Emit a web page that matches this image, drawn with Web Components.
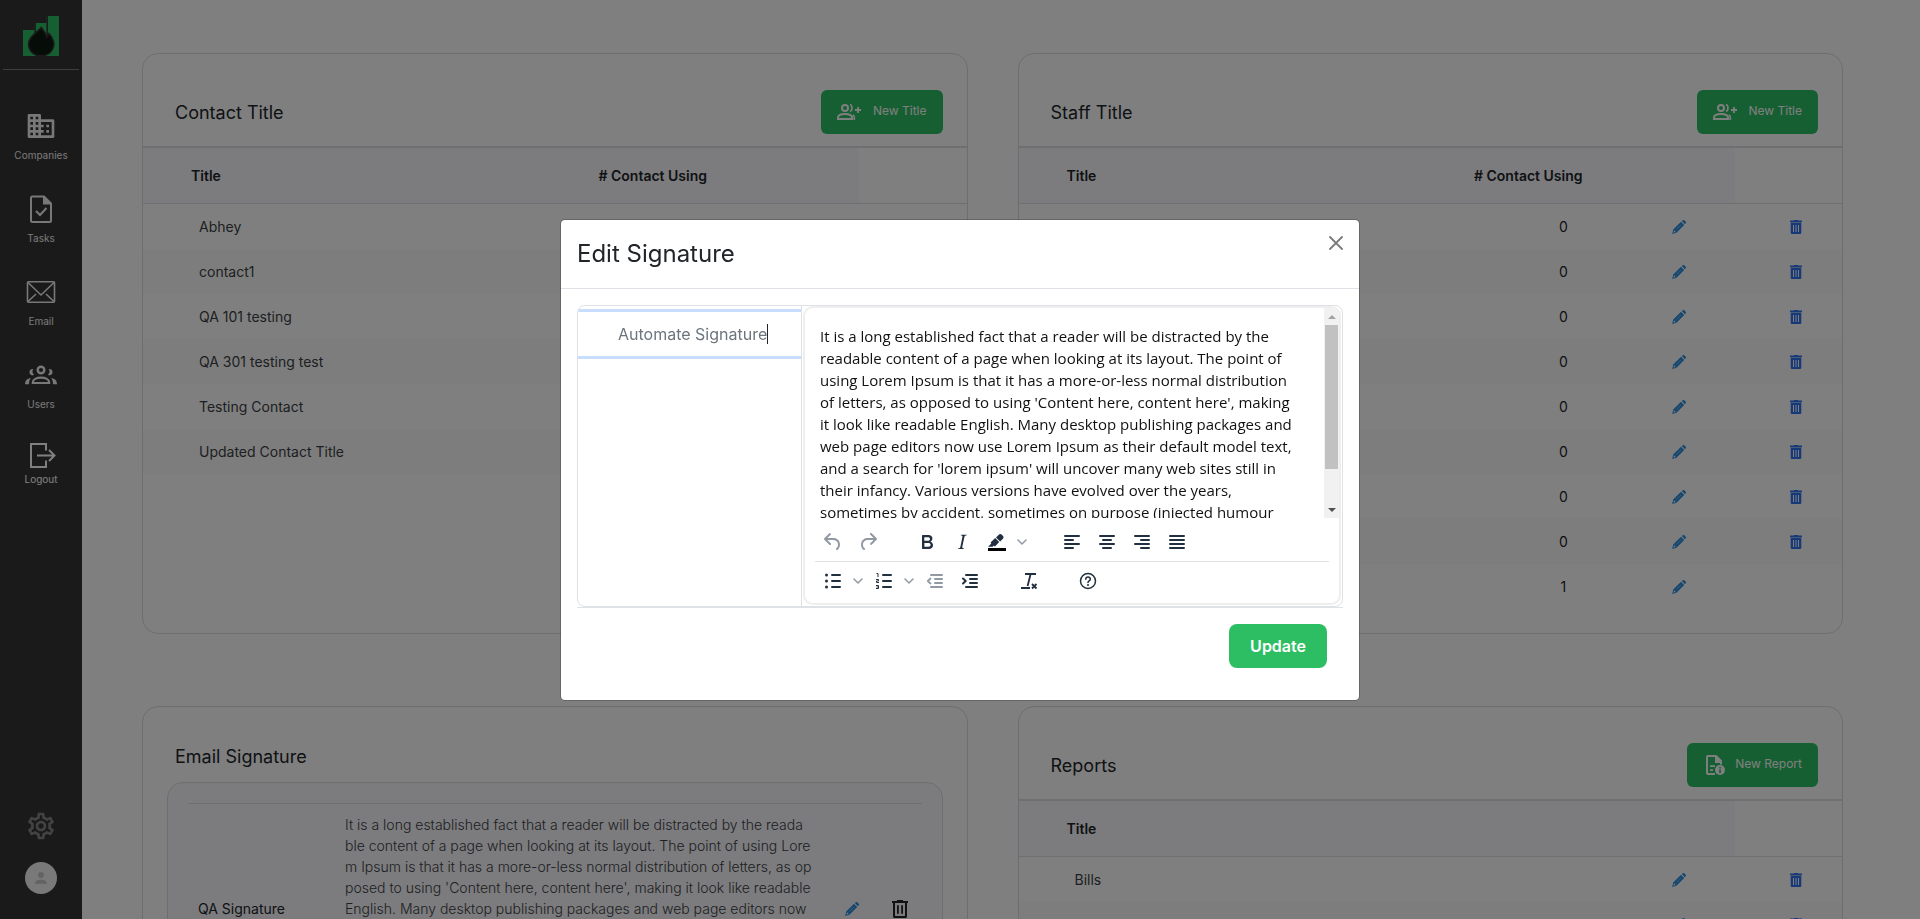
<!DOCTYPE html>
<html lang="en">
<head>
<meta charset="utf-8">
<title>Settings</title>
<style>
html, body { margin: 0; height: 100%; background: #fff; }
body { font-family: Inter, "Liberation Sans", sans-serif; font-optical-sizing: none; font-size: 14px; color: #212529; }
</style>
</head>
<body>
<app-shell></app-shell>

<script>
const ICONS = {
  logo: ['0 0 36 40', '<path fill="#2dbe64" d="M0 14h11.500V7H23.500V0H36v40H0z"/><path fill="none" stroke="#343434" stroke-width="1.500" d="M12.200 7v14M24.200 0v22"/><path fill="#0d1a12" stroke="#343434" stroke-width="1.500" d="M18.200 11.500c2.200 2.800 4.500 5 5.500 9.500l2.200-3.500c3 3.500 5 7 5 11A12.700 12 0 0 1 22 39.500h-8A12.700 12 0 0 1 5.500 28.500C5.500 21 13 17.500 18.200 11.500z"/>'],
  companies: ['0 0 24 24', '<path d="M12 7V4a1 1 0 0 0-1-1H3a1 1 0 0 0-1 1v16a1 1 0 0 0 1 1h18a1 1 0 0 0 1-1V8a1 1 0 0 0-1-1zM6 19H4v-2h2v2zm0-4H4v-2h2v2zm0-4H4V9h2v2zm0-4H4V5h2v2zm4 12H8v-2h2v2zm0-4H8v-2h2v2zm0-4H8V9h2v2zm0-4H8V5h2v2zm10 12h-8v-2h2v-2h-2v-2h2v-2h-2V9h8v10zm-2-8h-2v2h2v-2zm0 4h-2v2h2v-2z"/>'],
  tasks: ['0 0 32 32', '<path fill="none" stroke="currentColor" stroke-width="2" stroke-linejoin="round" d="M19 3.500H7.500A1.500 1.500 0 0 0 6 5v22.500A1.500 1.500 0 0 0 7.500 29h17a1.500 1.500 0 0 0 1.500-1.500V10.500z"/><path d="M18 3l8.500 8.500H18z"/><path fill="none" stroke="currentColor" stroke-width="2" d="M11 18l4 4 6.500-7"/>'],
  email: ['0 0 32 32', '<g fill="none" stroke="currentColor" stroke-width="1.600"><rect x="2.500" y="5.800" width="27" height="20.400" rx="1"/><path d="M3 6.500l13 12.500L29 6.500M3 25.500l8-7.500M29 25.500l-8-7.500"/></g>'],
  users: ['0 0 32 32', '<circle cx="16" cy="11" r="3.300" fill="none" stroke="currentColor" stroke-width="2.400"/><path fill="none" stroke="currentColor" stroke-width="2.200" d="M7.800 24v-.6c0-3 3.800-4.700 8.200-4.700s8.200 1.700 8.200 4.700v.6z"/><path d="M8.300 10a4.500 4.500 0 0 0 .8 5.800 3 3 0 0 1-4.600-2.900A3.100 3.100 0 0 1 8.300 10zM23.700 10a4.500 4.500 0 0 1-.8 5.800 3 3 0 0 0 4.600-2.900A3.100 3.100 0 0 0 23.700 10zM5.900 19.200C4.700 20.500 4 22 4 25.200H0C0 21.500 2.300 19.200 5.900 19.200zM26.100 19.200c1.200 1.300 1.900 2.800 1.900 6h4c0-3.700-2.300-6-5.900-6z"/>'],
  logout: ['0 0 32 32', '<g fill="none" stroke="currentColor" stroke-width="2"><path d="M21 11.500V5H6v23h15v-6.500M12 16.500h17M24 11l5.500 5.500L24 22"/></g>'],
  settings: ['0 0 24 24', '<path d="M19.430 12.980c.04-.32.07-.64.07-.98 0-.34-.03-.66-.07-.98l2.110-1.650c.19-.15.24-.42.12-.64l-2-3.460c-.09-.16-.26-.25-.44-.25-.06 0-.12.01-.17.03l-2.490 1c-.52-.4-1.080-.73-1.690-.98l-.38-2.650C14.460 2.180 14.250 2 14 2h-4c-.25 0-.46.18-.49.42l-.38 2.650c-.61.25-1.170.59-1.690.98l-2.490-1c-.06-.02-.12-.03-.18-.03-.17 0-.34.09-.43.25l-2 3.460c-.13.22-.07.49.12.64l2.110 1.650c-.04.32-.07.65-.07.98 0 .33.03.66.07.98l-2.110 1.650c-.19.15-.24.42-.12.64l2 3.460c.09.16.26.25.44.25.06 0 .12-.01.17-.03l2.490-1c.52.4 1.080.73 1.690.98l.38 2.650c.03.24.24.42.49.42h4c.25 0 .46-.18.49-.42l.38-2.650c.61-.25 1.170-.59 1.690-.98l2.490 1c.06.02.12.03.18.03.17 0 .34-.09.43-.25l2-3.460c.12-.22.07-.49-.12-.64l-2.110-1.650zm-1.980-1.710c.04.31.05.52.05.73 0 .21-.02.43-.05.73l-.14 1.130.89.7 1.080.84-.7 1.210-1.270-.51-1.040-.42-.9.68c-.43.32-.84.56-1.250.73l-1.060.43-.16 1.130-.2 1.350h-1.400l-.19-1.350-.16-1.130-1.060-.43c-.43-.18-.83-.41-1.230-.71l-.91-.7-1.060.43-1.270.51-.7-1.210 1.080-.84.89-.7-.14-1.130c-.03-.31-.05-.54-.05-.74s.02-.43.05-.73l.14-1.130-.89-.7-1.080-.84.7-1.210 1.270.51 1.040.42.9-.68c.43-.32.84-.56 1.250-.73l1.060-.43.16-1.130.2-1.350h1.390l.19 1.350.16 1.130 1.060.43c.43.18.83.41 1.230.71l.91.7 1.060-.43 1.270-.51.7 1.210-1.070.85-.89.7.14 1.130zM12 8c-2.210 0-4 1.790-4 4s1.790 4 4 4 4-1.790 4-4-1.790-4-4-4zm0 6c-1.100 0-2-.9-2-2s.9-2 2-2 2 .9 2 2-.9 2-2 2z"/>'],
  avatar: ['0 0 32 32', '<circle cx="16" cy="16" r="16" fill="#f2f2f2"/><circle cx="16" cy="13" r="3" fill="#c6c6c6"/><path fill="#c6c6c6" d="M10 21.800c0-2.700 2.500-4 6-4s6 1.300 6 4z"/>'],
  addPerson: ['0 0 24 24', '<g fill="none" stroke="currentColor" stroke-width="2"><circle cx="8" cy="8" r="3"/><path d="M1 19v-1.500c0-2.300 3.200-3.500 7-3.500s7 1.200 7 3.500V19z"/><path stroke-width="1.600" d="M13 4.600c2.600.8 2.600 6 0 6.800M17.300 20v-2.500c0-1.100-.5-2-1.300-2.800"/><path stroke-width="1.800" d="M21 7v6M18 10h6"/></g>'],
  report: ['0 0 24 24', '<path d="M13.500 2H5a2 2 0 0 0-2 2v16a2 2 0 0 0 2 2h7v-2H5V4h7v6h5v1.500h2V7.500z"/><path d="M7 12.200h5v1.800H7zM7 16.200h3v1.800H7z"/><circle cx="17" cy="17" r="5"/><path fill="#2dbe64" d="M16.200 16.400h1.700v3.600h-1.700zM16.200 13.900h1.700v1.500h-1.700z"/>'],
  pencil: ['0 0 14 14', '<path d="M9.800 1l.6-.5a1.600 1.600 0 0 1 2.200 0l.9.900a1.600 1.600 0 0 1 0 2.200l-.6.6zM9 1.800l3.200 3.200-7.700 7.800L.2 14l1-4.400zM2.100 10.300l-.6 2.200 2.200-.6z" fill-rule="evenodd"/><path stroke="#fff" stroke-opacity=".5" stroke-width=".7" d="M4.300 9.500l4.600-4.600"/>'],
  trash: ['0 0 12 14', '<path fill-rule="evenodd" d="M4 0h4v.6h4v1.600H0V.6h4zM.7 2.800h10.600v9.900c0 .7-.6 1.300-1.300 1.300H2c-.7 0-1.300-.6-1.300-1.300zM3 5v7h1V5zm2.500 0v7h1V5zM8 5v7h1V5z"/>'],
  trashOutline: ['0 0 16 18', '<path fill-rule="evenodd" d="M5 0h6v1h5v2h-1v13.500c0 .8-.7 1.500-1.500 1.500h-11C1.700 18 1 17.300 1 16.500V3H0V1h5zM3 3v13h10V3zM5 5.200h1.800v8.600H5zm4.200 0H11v8.600H9.200z"/>'],
  close: ['0 0 14 14', '<path fill="none" stroke="currentColor" stroke-width="1.800" stroke-linecap="round" d="M1 1l12 12M13 1L1 13"/>'],
  undo: ['0 0 24 24', '<path d="M6.400 8H12c3.700 0 6.200 2 6.800 5.100.6 2.700-.4 5.600-2.300 6.800a1 1 0 0 1-1-1.800c1.100-.6 1.800-2.700 1.400-4.600-.5-2.100-2.100-3.500-4.900-3.500H6.400l3.300 3.300a1 1 0 1 1-1.400 1.400l-5-5a1 1 0 0 1 0-1.400l5-5a1 1 0 0 1 1.400 1.400z"/>'],
  redo: ['0 0 24 24', '<path d="M17.600 10H12c-2.800 0-4.400 1.400-4.900 3.500-.4 2 .3 4 1.400 4.600a1 1 0 1 1-1 1.800c-2-1.200-2.900-4.100-2.300-6.800.6-3 3-5.100 6.800-5.100h5.600l-3.300-3.300a1 1 0 1 1 1.400-1.400l5 5a1 1 0 0 1 0 1.400l-5 5a1 1 0 0 1-1.400-1.400z"/>'],
  bold: ['0 0 24 24', '<path d="M7.800 19c-.3 0-.5 0-.6-.2l-.2-.5V5.700c0-.2 0-.4.2-.5l.6-.2h5c1.500 0 2.700.3 3.500 1 .7.6 1.100 1.400 1.100 2.500a3 3 0 0 1-.6 1.900c-.4.6-1 1-1.600 1.200.4.1.9.3 1.300.6s.8.7 1 1.200c.4.4.5 1 .5 1.600 0 1.300-.4 2.300-1.300 3-.8.7-2.100 1-3.800 1H7.800zm5-8.300c.6 0 1.200-.1 1.600-.5.4-.3.6-.7.6-1.300 0-1.100-.8-1.700-2.300-1.700H9.300v3.500h3.400zm.5 6c.7 0 1.300-.1 1.700-.4.4-.4.6-.9.6-1.500s-.2-1-.7-1.400c-.4-.3-1-.4-2-.4H9.400v3.800h4z"/>'],
  italic: ['0 0 24 24', '<path d="M16.700 4.700l-.1.900h-.3c-.6 0-1 0-1.400.3-.3.3-.4.6-.5 1.100l-2.100 9.800v.6c0 .5.4.8 1.400.8h.2l-.2.800H8l.2-.8h.2c1.100 0 1.800-.5 2-1.500l2-9.800.1-.5c0-.6-.4-.8-1.400-.8h-.3l.2-.9h5.800z"/>'],
  highlight: ['0 0 24 24', '<path fill="#000" d="M3 18h18v3H3z"/><path d="M7.700 16.700H3l3.300-3.300-.7-.8L10.200 8l4 4.100-4 4.200c-.2.2-.6.2-.8 0l-.6-.7-1.100 1.100zm5-7.500L11 7.400l3-2.900a2 2 0 0 1 2.600 0L18 6c.7.7.7 2 0 2.700l-2.900 2.900-1.800-1.800-.5-.6"/>'],
  chevron: ['0 0 10 10', '<path fill="none" stroke="currentColor" stroke-width="1.500" stroke-linecap="round" stroke-linejoin="round" d="M1 3l4 4 4-4"/>'],
  alignLeft: ['0 0 24 24', '<path class="l" d="M5 6h14M5 10h8M5 14h14M5 18h8"/>'],
  alignCenter: ['0 0 24 24', '<path class="l" d="M5 6h14M8 10h8M5 14h14M8 18h8"/>'],
  alignRight: ['0 0 24 24', '<path class="l" d="M5 6h14M11 10h8M5 14h14M11 18h8"/>'],
  alignJustify: ['0 0 24 24', '<path class="l" d="M5 6h14M5 10h14M5 14h14M5 18h14"/>'],
  bullets: ['0 0 24 24', '<path class="l" d="M11 6h8M11 12h8M11 18h8"/><circle cx="5.500" cy="6" r="1.500"/><circle cx="5.500" cy="12" r="1.500"/><circle cx="5.500" cy="18" r="1.500"/>'],
  numbers: ['0 0 24 24', '<path class="l" d="M11 6h8M11 12h8M11 18h8"/><path fill="none" stroke="currentColor" d="M4.500 4.500H6V8M4 10.500h2.500V12H4.500v1.500H7M4 16.500h2.500v3H4M4.500 18h2"/>'],
  outdent: ['0 0 24 24', '<path class="l" d="M8 6h11M12 10h7M12 14h7M8 18h11"/><path fill="none" stroke="currentColor" stroke-width="1.800" stroke-linecap="round" stroke-linejoin="round" d="M7.500 9.500L4.800 12l2.700 2.500"/>'],
  indent: ['0 0 24 24', '<path class="l" d="M8 6h11M12 10h7M12 14h7M8 18h11"/><path fill="none" stroke="currentColor" stroke-width="2" stroke-linecap="round" stroke-linejoin="round" d="M5 9.500L7.700 12 5 14.500"/>'],
  clear: ['0 0 24 24', '<path fill="none" stroke="currentColor" stroke-width="1.800" d="M8 5h11M13.600 5l-3 12M4 19h9M15 15l4.500 4.500M19.500 15L15 19.500"/>'],
  help: ['0 0 24 24', '<circle cx="12" cy="12" r="7.500" fill="none" stroke="currentColor" stroke-width="1.500"/><path fill="none" stroke="currentColor" stroke-width="1.500" stroke-linecap="round" d="M9.800 10.200c.2-3 4.600-2.700 4.500 0 0 1.600-2.300 1.600-2.300 3.300"/><circle cx="12" cy="16" r="1"/>'],
  arrowUp: ['0 0 8 8', '<path d="M0 6l4-4 4 4z"/>'],
  arrowDown: ['0 0 8 8', '<path d="M0 2l4 4 4-4z"/>']
};

function define(name, html) {
  customElements.define(name, class extends HTMLElement {
    constructor() {
      super();
      this.attachShadow({ mode: 'open' });
    }
    connectedCallback() {
      if (this.shadowRoot.childNodes.length) return;
      const t = document.createElement('template');
      t.innerHTML = typeof html === 'function' ? html(this) : html;
      this.shadowRoot.append(t.content.cloneNode(true));
    }
  });
}

define('ui-icon', el => {
  const [box, body] = ICONS[el.getAttribute('name')];
  return `<style>
    :host { display: inline-flex; flex: none; width: 24px; height: 24px; }
    svg { display: block; width: 100%; height: 100%; fill: currentColor; }
    .l { fill: none; stroke: currentColor; stroke-width: 2; stroke-linecap: round; }
  </style><svg viewBox="${box}" aria-hidden="true">${body}</svg>`;
});

define('nav-item', el => `<style>
  :host { display: block; color: #f0f0f0; }
  a { display: flex; flex-direction: column; align-items: center; gap: 5px; color: inherit; text-decoration: none; font-size: 10px; line-height: 16px; }
  ui-icon { width: 32px; height: 32px; }
  :host([compact]) a { gap: 0; }
  :host([compact]) { margin-top: -3px; color: #fff; }
</style><a href="#${el.getAttribute('icon')}"><ui-icon name="${el.getAttribute('icon')}"></ui-icon><slot></slot></a>`);

define('side-nav', `<style>
  :host { display: flex; flex-direction: column; align-items: center; box-sizing: border-box; width: 82px; height: 100vh; padding: 16px 3px 25px; background: #343434; }
  .logo { display: flex; justify-content: center; width: 100%; padding-bottom: 13px; border-bottom: 1px solid #7d7d7d; }
  .logo ui-icon { width: 36px; height: 40px; }
  nav { display: flex; flex-direction: column; gap: 30px; padding-top: 40px; }
  .foot { display: flex; flex-direction: column; align-items: center; gap: 20px; margin-top: auto; }
  .foot a { display: flex; color: #858585; }
  .foot ui-icon { width: 32px; height: 32px; }
</style>
<a class="logo" href="#home" aria-label="Home"><ui-icon name="logo"></ui-icon></a>
<nav>
  <nav-item icon="companies">Companies</nav-item>
  <nav-item icon="tasks">Tasks</nav-item>
  <nav-item icon="email">Email</nav-item>
  <nav-item icon="users">Users</nav-item>
  <nav-item icon="logout" compact>Logout</nav-item>
</nav>
<div class="foot">
  <a href="#settings" aria-label="Settings"><ui-icon name="settings"></ui-icon></a>
  <a href="#profile" aria-label="Profile"><ui-icon name="avatar"></ui-icon></a>
</div>`);

define('action-button', el => `<style>
  :host { display: block; }
  button { display: flex; align-items: center; justify-content: center; gap: 12px; height: 44px; padding: 0 16px; border: 0; border-radius: 6px; background: #2dbe64; color: #fff; font: 400 12px/16px Inter, sans-serif; font-optical-sizing: none; cursor: pointer; }
  :host([icon="report"]) button { gap: 8px; }
  :host([large]) button { padding: 0 21px; border-radius: 8px; font-size: 16px; font-weight: 600; }
  .t { padding-bottom: 2px; }
  :host([large]) .t { padding: 0; }
</style><button type="button">${el.hasAttribute('icon') ? `<ui-icon name="${el.getAttribute('icon')}"></ui-icon>` : ''}<span class="t"><slot></slot></span></button>`);

define('panel-card', `<style>
  :host { display: block; box-sizing: border-box; padding-bottom: 24px; border: 1px solid #dcdcdf; border-radius: 16px; background: #fff; }
  header { display: flex; align-items: center; justify-content: space-between; padding: 36px 24px 12px 32px; }
  h2 { margin: 0; padding-top: 2px; color: #212529; font-size: 18px; font-weight: 400; line-height: 24px; }
  :host([compact]) header { padding-bottom: 13px; }
</style>
<header><h2><slot name="title"></slot></h2><slot name="action"></slot></header>
<slot></slot>`);

define('title-table', el => {
  const names = (el.getAttribute('names') || '').split('|');
  const counts = (el.getAttribute('counts') || '').split('|');
  const heading = el.getAttribute('count-heading') || '';
  const rows = names.map((n, i) => `<tr><td>${n}</td><td class="n">${counts[i] || ''}</td>
    <td class="e"><button type="button" aria-label="Edit"><ui-icon name="pencil"></ui-icon></button></td>
    <td class="d">${counts[i] === '1' ? '' : '<button type="button" aria-label="Delete"><ui-icon name="trash"></ui-icon></button>'}</td></tr>`).join('');
  return `<style>
    :host { display: block; border-top: 2px solid #dedee2; }
    table { width: 100%; table-layout: fixed; border-collapse: separate; border-spacing: 0; font-size: 14px; line-height: 20px; }
    col.c1 { width: 53%; } col.c2 { width: 21%; }
    th, td { height: 55px; padding: 0; border-bottom: 1px solid #dedee2; text-align: left; }
    th { background: #f8f8fc; color: #212529; font-weight: 600; }
    th:last-child { background: #fff; }
    th:first-child { padding-left: 48px; }
    th:nth-child(2) { padding-left: 19px; white-space: nowrap; }
    td { height: 45px; border: 0; color: #3b3f44; }
    td:first-child { padding-left: 56px; }
    tr:nth-child(even) td { background: #fbfbfb; }
    td.n { padding-left: 44px; color: #212529; text-align: center; }
    td.e { padding-right: 4px; }
    td.d { padding-left: 16px; }
    button { display: flex; margin: 0 auto; padding: 0; border: 0; background: none; color: #2f8fdc; cursor: pointer; }
    .e ui-icon { width: 14px; height: 14px; }
    .d ui-icon { width: 12px; height: 14px; }
    .d button { color: #2f72f0; }
  </style>
  <table><colgroup><col class="c1"><col class="c2"><col><col></colgroup>
  <thead><tr><th>Title</th><th>${heading}</th><th></th><th></th></tr></thead>
  <tbody>${rows}</tbody></table>`;
});

const LOREM = "It is a long established fact that a reader will be distracted by the readable content of a page when looking at its layout. The point of using Lorem Ipsum is that it has a more-or-less normal distribution of letters, as opposed to using 'Content here, content here', making it look like readable English. Many desktop publishing packages and web page editors now use Lorem Ipsum as their default model text, and a search for 'lorem ipsum' will uncover many web sites still in their infancy. Various versions have evolved over the years, sometimes by accident, sometimes on purpose (injected humour and the like).";
const breakable = LOREM.replace('readable', 'reada<wbr>ble').replace('Lorem', 'Lore<wbr>m').replace('opposed', 'op<wbr>posed');

define('signature-list', `<style>
  :host { display: block; margin: 0 24px; padding: 20px; border: 1px solid #dcdcdf; border-radius: 16px; background: #f8f8fc; }
  .row { display: grid; grid-template-columns: 157px minmax(0, 470px) auto auto; justify-content: start; align-items: center; border-top: 1px solid #dedee2; padding-top: 10px; }
  .name { padding-left: 10px; color: #212529; font-size: 14px; line-height: 21px; }
  p { margin: 0; font-size: 14px; font-weight: 300; line-height: 21px; color: #3b3f44; }
  button { display: flex; padding: 0; border: 0; background: none; color: #2f8fdc; cursor: pointer; }
  .edit { margin-left: 30px; }
  .edit ui-icon { width: 14px; height: 14px; }
  .del { margin-left: 33px; color: #212529; }
  .del ui-icon { width: 16px; height: 18px; }
</style>
<div class="row"><span class="name">QA Signature</span><p>${breakable}</p>
<button type="button" class="edit" aria-label="Edit"><ui-icon name="pencil"></ui-icon></button>
<button type="button" class="del" aria-label="Delete"><ui-icon name="trashOutline"></ui-icon></button></div>`);

const tool = (icon, label, off) => `<button type="button" aria-label="${label}"${off ? ' class="off"' : ''}><ui-icon name="${icon}"></ui-icon></button>`;
const more = label => `<button type="button" class="more" aria-label="${label}"><ui-icon name="chevron"></ui-icon></button>`;

define('rich-editor', `<style>
  :host { display: flex; flex-direction: column; box-sizing: border-box; min-width: 0; border: 2px solid #eee; border-radius: 10px; overflow: hidden; }
  .view { display: grid; grid-template-columns: minmax(0, 1fr) 15px; height: 210px; }
  .text { overflow: hidden; padding: 17px 24px 0 15px; color: #111; font: 400 15px/22px "Open Sans", "Noto Sans", sans-serif; }
  .text p { margin: 0; }
  .bar { display: flex; flex-direction: column; align-items: center; background: #f1f1f1; }
  .bar ui-icon { width: 8px; height: 8px; padding: 5px 0 4px; color: #a3a3a3; }
  .bar ui-icon:last-child { margin-top: auto; color: #505050; }
  .thumb { width: 13px; height: 144px; background: #c1c1c1; }
  .tools { display: flex; gap: 25px; height: 38px; margin: 0 10px; padding-left: 1px; align-items: center; }
  .tools.first { margin-top: 5px; border-bottom: 1px solid #dfe1e4; }
  .tools:last-child { margin-bottom: 3px; }
  .group { display: flex; gap: 1px; }
  .split { display: flex; }
  button { display: flex; align-items: center; justify-content: center; width: 34px; height: 28px; padding: 0; border: 0; background: none; color: #222f3e; cursor: pointer; }
  .off { color: #9199a3; }
  .more { width: 16px; color: #9199a3; }
  .more ui-icon { width: 10px; height: 10px; }
</style>
<div class="view">
  <div class="text" role="textbox" aria-multiline="true" aria-label="Signature text" contenteditable="true"><p>${LOREM}</p></div>
  <div class="bar"><ui-icon name="arrowUp"></ui-icon><div class="thumb"></div><ui-icon name="arrowDown"></ui-icon></div>
</div>
<div class="tools first" role="toolbar">
  <div class="group">${tool('undo', 'Undo', 1)}${tool('redo', 'Redo', 1)}</div>
  <div class="group">${tool('bold', 'Bold')}${tool('italic', 'Italic')}<div class="split">${tool('highlight', 'Background color')}${more('Background color menu')}</div></div>
  <div class="group">${tool('alignLeft', 'Align left')}${tool('alignCenter', 'Align center')}${tool('alignRight', 'Align right')}${tool('alignJustify', 'Justify')}</div>
</div>
<div class="tools" role="toolbar">
  <div class="group"><div class="split">${tool('bullets', 'Bullet list')}${more('Bullet list menu')}</div><div class="split">${tool('numbers', 'Numbered list')}${more('Numbered list menu')}</div>${tool('outdent', 'Decrease indent', 1)}${tool('indent', 'Increase indent')}</div>
  <div class="group">${tool('clear', 'Clear formatting')}</div>
  <div class="group">${tool('help', 'Help')}</div>
</div>`);

define('signature-modal', `<style>
  :host { position: fixed; inset: 0; display: grid; place-items: center; background: rgba(0, 0, 0, .5); }
  section { width: min(800px, 100% - 16px); box-sizing: border-box; border: 1px solid rgba(0, 0, 0, .2); border-radius: 5px; background: #fff; background-clip: padding-box; }
  header { display: flex; align-items: flex-start; justify-content: space-between; padding: 16px; border-bottom: 1px solid #dee2e6; }
  h1 { margin: 0; font-size: 24px; font-weight: 400; line-height: 36px; color: #212529; }
  .close { display: flex; padding: 0; border: 0; background: none; color: #7b7b7b; cursor: pointer; }
  .close ui-icon { width: 14px; height: 14px; }
  .frame { display: grid; grid-template-columns: 224px minmax(0, 1fr); margin: 16px 16px 0; border: 1px solid #dee2e6; border-radius: 8px; overflow: hidden; }
  .name { border-right: 1px solid #dee2e6; padding-top: 6px; overflow: hidden; }
  label { display: flex; align-items: center; height: 44px; padding-left: 40px; background: #fff; box-shadow: 0 0 0 3px #c7deff; }
  input { field-sizing: content; padding: 0; border: 0; outline: 0; background: none; color: #6c757d; font: 400 16px/24px Inter, sans-serif; font-optical-sizing: none; }
  .caret { width: 1px; height: 20px; background: #212529; }
  rich-editor { margin: 0 1px 1px; }
  footer { display: flex; justify-content: flex-end; margin: 0 16px; padding: 16px 16px 32px; border-top: 1px solid #dee2e6; }
</style>
<section role="dialog" aria-modal="true" aria-labelledby="heading">
  <header><h1 id="heading">Edit Signature</h1><button type="button" class="close" aria-label="Close"><ui-icon name="close"></ui-icon></button></header>
  <div class="frame">
    <div class="name"><label><input type="text" aria-label="Signature name" value="Automate Signature"><span class="caret"></span></label></div>
    <rich-editor></rich-editor>
  </div>
  <footer><action-button large>Update</action-button></footer>
</section>`);

define('app-shell', `<style>
  :host { display: grid; grid-template-columns: 82px minmax(0, 1fr); height: 100vh; }
  main { display: grid; grid-template-columns: repeat(2, minmax(0, 1fr)); align-content: start; gap: 72px 50px; padding: 53px 77px 40px 60px; overflow-y: auto; scrollbar-width: none; }
</style>
<side-nav></side-nav>
<main>
  <panel-card><span slot="title">Contact Title</span><action-button slot="action" icon="addPerson">New Title</action-button>
    <title-table count-heading="# Contact Using" names="Abhey|contact1|QA 101 testing|QA 301 testing test|Testing Contact|Updated Contact Title"></title-table></panel-card>
  <panel-card><span slot="title">Staff Title</span><action-button slot="action" icon="addPerson">New Title</action-button>
    <title-table count-heading="# Contact Using" names="||||||||" counts="0|0|0|0|0|0|0|0|1"></title-table></panel-card>
  <panel-card compact><span slot="title">Email Signature</span><signature-list></signature-list></panel-card>
  <panel-card><span slot="title">Reports</span><action-button slot="action" icon="report">New Report</action-button>
    <title-table names="Bills||"></title-table></panel-card>
</main>
<signature-modal></signature-modal>`);
</script>
</body>
</html>
